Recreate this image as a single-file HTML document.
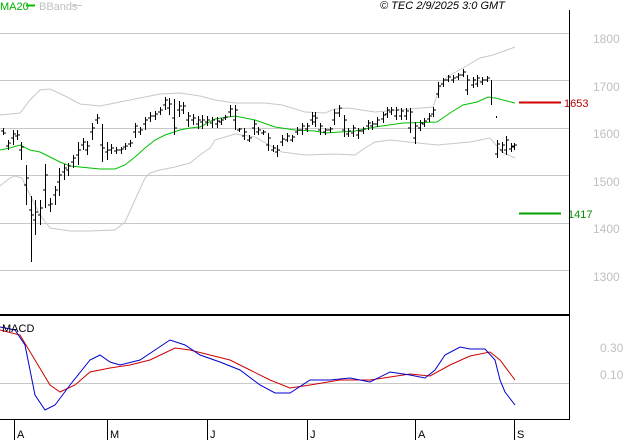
<!DOCTYPE html>
<html><head><meta charset="utf-8"><style>
html,body{margin:0;padding:0;background:#fff;width:627px;height:440px;overflow:hidden}
svg{display:block}
text{font-family:"Liberation Sans",sans-serif}
</style></head><body>
<svg width="627" height="440" viewBox="0 0 627 440" xmlns="http://www.w3.org/2000/svg">
<g stroke="#c8c8c8" stroke-width="1">
<line x1="0" y1="33.5" x2="569" y2="33.5"/><line x1="0" y1="80.5" x2="569" y2="80.5"/><line x1="0" y1="128.5" x2="569" y2="128.5"/><line x1="0" y1="175.5" x2="569" y2="175.5"/><line x1="0" y1="223.5" x2="569" y2="223.5"/><line x1="0" y1="270.5" x2="569" y2="270.5"/><line x1="0" y1="383.5" x2="569" y2="383.5"/>
</g>
<g fill="#c0c0c0" font-size="12">
<text x="593" y="43">1800</text><text x="593" y="91">1700</text><text x="593" y="138">1600</text><text x="593" y="186">1500</text><text x="593" y="233">1400</text><text x="593" y="281">1300</text>
<text x="600" y="352">0.30</text><text x="600" y="379">0.10</text>
</g>
<polyline fill="none" stroke="#c8c8c8" points="0,115 20,113 30,100 40,90 50,89 65,96 80,104 100,106 120,102 140,98 160,94 180,93 200,96 215,100 235,103 265,103 282,105 305,112 325,113 335,109 348,108 375,112 433,107 440,87 447,77 463,68 480,58 493,55 515,47"/>
<polyline fill="none" stroke="#c8c8c8" points="0,186 10,178 15,176 22,178 30,195 40,215 50,228 70,231 90,231 115,230 125,222 135,200 145,178 150,173 160,170 175,167 190,163 200,155 210,148 215,140 235,134 255,137 282,152 305,155 335,154 355,155 365,148 375,142 390,140 437,145 470,142 490,138 502,152 515,158"/>
<polyline fill="none" stroke="#00c000" points="0,150 10,148 20,145 30,150 40,152 50,157 60,162 70,166 80,167 100,169 115,169 125,165 135,157 145,148 155,140 165,135 180,130 190,128 200,127 215,119 235,116 255,120 275,127 295,130 315,131 325,133 355,131 375,127 403,123 437,122 450,113 463,105 477,102 488,97 495,98 515,103"/>
<g stroke="#000" fill="none" shape-rendering="crispEdges">
<path d="M3.5,128V135M8.5,140V150M13.5,130V145M17.5,130V140M21.5,142V160M26.5,165V205M31.5,196V262M35.5,200V235M40.5,200V225M45.5,164V208M50.5,198V212M55.5,186V205M59.5,168V196M64.5,164V180M68.5,163V176M73.5,155V168M78.5,142V165M83.5,138V150M87.5,141V155M92.5,123V140M97.5,114V124M102.5,124V162M107.5,142V160M111.5,144V154M116.5,147V154M121.5,147V154M125.5,143V150M130.5,140V147M135.5,123V138M140.5,127V135M145.5,117V130M150.5,112V122M155.5,111V120M160.5,107V115M165.5,97V110M169.5,98V115M174.5,99V135M179.5,101V117M183.5,102V114M188.5,112V127M193.5,114V125M198.5,116V129M202.5,115V129M207.5,116V126M212.5,117V128M217.5,117V128M221.5,118V125M225.5,115V120M230.5,105V117M235.5,105V130M239.5,128V132M244.5,128V140M249.5,135V142M254.5,120V135M258.5,127V135M263.5,130V135M268.5,133V151M273.5,145V152M277.5,145V157M282.5,135V146M287.5,133V142M292.5,135V142M297.5,127V135M302.5,123V135M307.5,123V132M312.5,112V125M315.5,112V127M320.5,123V135M325.5,128V135M330.5,127V133M334.5,109V125M339.5,105V117M344.5,115V137M348.5,128V137M353.5,125V137M358.5,128V139M363.5,127V134M368.5,120V130M372.5,121V130M377.5,117V127M383.5,112V123M387.5,107V118M391.5,107V115M396.5,107V120M401.5,108V120M406.5,108V120M410.5,108V133M415.5,122V144M420.5,120V131M424.5,118V127M429.5,113V122M433.5,107V117M438.5,82V98M443.5,78V87M448.5,75V82M453.5,75V83M458.5,73V80M463.5,69V77M467.5,75V95M473.5,77V88M477.5,75V87M482.5,77V85M487.5,76V82M491.5,80V105M496.5,116V118M497.5,140V158M502.5,142V153M506.5,136V155M511.5,143V152M514.5,143V150"/>
<path d="M1,131h2M4,133h2M6,146h2M9,143h2M11,138h2M14,134h2M15,136h2M18,135h2M19,150h2M22,147h2M24,185h2M27,178h2M29,210h2M32,215h2M33,220h2M36,212h2M38,215h2M41,208h2M43,190h2M46,175h2M48,205h2M51,204h2M53,195h2M56,190h2M57,182h2M60,175h2M62,172h2M65,168h2M66,170h2M69,166h2M71,162h2M74,158h2M76,155h2M79,150h2M81,145h2M84,142h2M85,150h2M88,146h2M90,132h2M93,128h2M95,120h2M98,118h2M100,145h2M103,148h2M105,152h2M108,150h2M109,150h2M112,148h2M114,151h2M117,150h2M119,150h2M122,149h2M123,147h2M126,146h2M128,144h2M131,143h2M133,132h2M136,126h2M138,132h2M141,130h2M143,124h2M146,120h2M148,118h2M151,116h2M153,116h2M156,114h2M158,112h2M161,110h2M163,105h2M166,100h2M167,108h2M170,104h2M172,118h2M175,128h2M177,110h2M180,106h2M181,110h2M184,106h2M186,120h2M189,116h2M191,120h2M194,118h2M196,124h2M199,120h2M200,122h2M203,120h2M205,122h2M208,120h2M210,123h2M213,120h2M215,124h2M218,121h2M219,122h2M222,120h2M223,118h2M226,117h2M228,112h2M231,109h2M233,120h2M236,110h2M237,130h2M240,129h2M242,136h2M245,132h2M247,140h2M250,138h2M252,128h2M255,124h2M256,132h2M259,130h2M261,133h2M264,132h2M266,145h2M269,138h2M271,150h2M274,148h2M275,152h2M278,150h2M280,142h2M283,139h2M285,140h2M288,136h2M290,140h2M293,137h2M295,132h2M298,130h2M300,130h2M303,126h2M305,129h2M308,126h2M310,120h2M313,116h2M313,122h2M316,118h2M318,130h2M321,126h2M323,132h2M326,130h2M328,130h2M331,129h2M332,120h2M335,113h2M337,113h2M340,108h2M342,130h2M345,120h2M346,134h2M349,131h2M351,133h2M354,128h2M356,135h2M359,131h2M361,131h2M364,129h2M366,126h2M369,123h2M370,126h2M373,124h2M375,124h2M378,120h2M381,119h2M384,115h2M385,114h2M388,110h2M389,112h2M392,110h2M394,116h2M397,110h2M399,116h2M402,111h2M404,116h2M407,111h2M408,128h2M411,112h2M413,138h2M416,126h2M418,128h2M421,123h2M422,124h2M425,121h2M427,119h2M430,116h2M431,114h2M434,110h2M436,94h2M439,86h2M441,84h2M444,80h2M446,80h2M449,77h2M451,80h2M454,78h2M456,77h2M459,75h2M461,75h2M464,72h2M465,90h2M468,80h2M471,85h2M474,80h2M475,84h2M478,78h2M480,82h2M483,80h2M485,80h2M488,78h2M495,154h2M498,144h2M500,150h2M503,145h2M504,150h2M507,140h2M509,149h2M512,146h2M512,147h2M515,145h2"/>
</g>
<line x1="519" y1="102.5" x2="561" y2="102.5" stroke="#d00000" stroke-width="2"/>
<text x="564" y="107" fill="#c00000" font-size="11">1653</text>
<line x1="519" y1="213.5" x2="561" y2="213.5" stroke="#00a000" stroke-width="2"/>
<text x="568" y="218" fill="#009000" font-size="11">1417</text>
<polyline fill="none" stroke="#d00000" points="0,330 20,335 35,360 50,385 60,392 75,385 90,372 110,368 130,365 150,360 175,348 190,350 210,355 230,360 250,370 270,380 290,388 310,385 340,380 370,380 390,377 410,374 430,376 450,365 470,356 490,352 500,360 515,380"/>
<polyline fill="none" stroke="#0000d0" points="0,327 15,330 25,345 35,395 45,410 55,405 70,385 90,360 100,355 110,362 120,365 140,360 155,350 170,340 185,345 200,355 220,362 240,370 260,385 275,393 290,393 310,380 330,380 350,378 370,382 390,372 410,375 425,378 435,370 445,355 460,347 470,349 485,349 495,360 500,380 505,392 515,405"/>
<line x1="569.5" y1="10" x2="569.5" y2="419" stroke="#000"/>
<line x1="0" y1="315" x2="569" y2="315" stroke="#000" stroke-width="2"/>
<line x1="0" y1="419.5" x2="570" y2="419.5" stroke="#000"/>
<g stroke="#000"><line x1="14.5" y1="419" x2="14.5" y2="440"/><line x1="107.5" y1="419" x2="107.5" y2="440"/><line x1="207.5" y1="419" x2="207.5" y2="440"/><line x1="307.5" y1="419" x2="307.5" y2="440"/><line x1="415.5" y1="419" x2="415.5" y2="440"/><line x1="514.5" y1="419" x2="514.5" y2="440"/></g>
<g font-size="11" fill="#000"><text x="17" y="438">A</text><text x="110" y="438">M</text><text x="210" y="438">J</text><text x="310" y="438">J</text><text x="418" y="438">A</text><text x="517" y="438">S</text>
<text x="2" y="332">MACD</text></g>
<text x="0" y="10" fill="#00b000" font-size="11">MA20</text>
<line x1="26" y1="5.5" x2="35" y2="5.5" stroke="#00c000" stroke-width="2"/>
<text x="39" y="10" fill="#c0c0c0" font-size="11">BBands</text>
<line x1="72" y1="5.5" x2="82" y2="5.5" stroke="#c8c8c8" stroke-width="1"/>
<text x="380" y="9" fill="#000" font-size="11" font-style="italic">© TEC 2/9/2025 3:0 GMT</text>
</svg>
</body></html>
